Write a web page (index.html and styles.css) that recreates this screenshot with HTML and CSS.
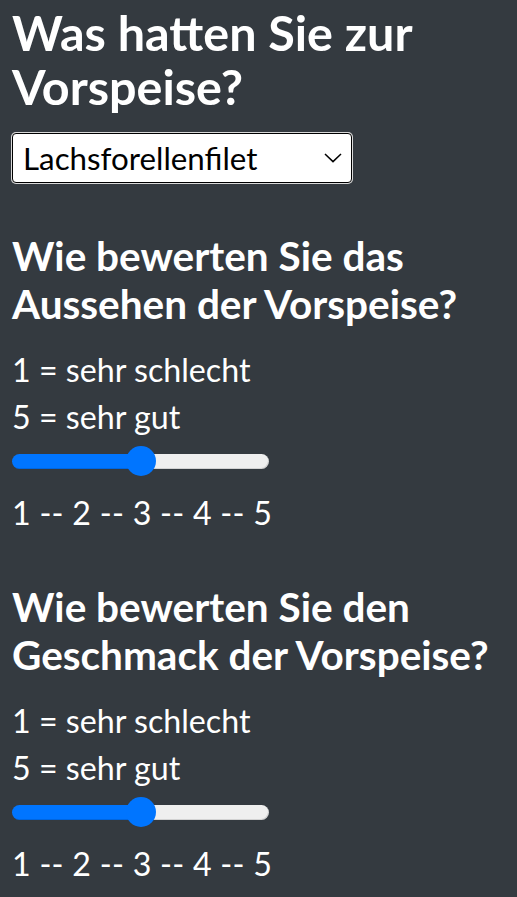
FILE: index.html
```html
<!DOCTYPE html>
<html lang="de">
<head>
<meta charset="utf-8">
<title>Vorspeise</title>
<link rel="stylesheet" href="styles.css">
</head>
<body>
<main class="page">
  <h1 class="title">Was hatten Sie zur Vorspeise?</h1>
  <div class="select-wrap">
    <select class="dish-select">
      <option>Lachsforellenfilet</option>
      <option>Tomatensuppe</option>
      <option>Salat</option>
    </select>
    <svg class="chevron" width="18" height="10" viewBox="0 0 18 10" aria-hidden="true">
      <path d="M1 1 L9 8.6 L17 1" fill="none" stroke="#000" stroke-width="1.5"/>
    </svg>
  </div>

  <section class="rating first">
    <h2 class="question">Wie bewerten Sie das Aussehen der Vorspeise?</h2>
    <p class="hint">1 = sehr schlecht</p>
    <p class="hint">5 = sehr gut</p>
    <input class="range" type="range" min="1" max="5" step="1" value="3">
    <p class="scale">1 -- 2 -- 3 -- 4 -- 5</p>
  </section>

  <section class="rating">
    <h2 class="question">Wie bewerten Sie den Geschmack der Vorspeise?</h2>
    <p class="hint">1 = sehr schlecht</p>
    <p class="hint">5 = sehr gut</p>
    <input class="range" type="range" min="1" max="5" step="1" value="3">
    <p class="scale">1 -- 2 -- 3 -- 4 -- 5</p>
  </section>
</main>
</body>
</html>
```

FILE: styles.css
```css
html, body {
  margin: 0;
  padding: 0;
  background: #343a40;
}

body {
  color: #ffffff;
  font-family: "Lato", "Open Sans", sans-serif;
  font-size: 32.2px;
  line-height: 47px;
}

.page {
  padding: 5px 12px 0 12px;
}

.title {
  margin: 0 0 20px 0;
  font-size: 48.5px;
  line-height: 54px;
  font-weight: 700;
}

.select-wrap {
  position: relative;
  width: 340px;
  height: 50px;
}

.dish-select {
  -webkit-appearance: none;
  appearance: none;
  display: block;
  box-sizing: border-box;
  width: 340px;
  height: 50px;
  margin: 0;
  padding: 0 40px 0 10px;
  font-family: "Lato", "Open Sans", sans-serif;
  font-size: 31.3px;
  color: #000000;
  background: #ffffff;
  border: 1px solid #000000;
  border-radius: 4px;
  box-shadow: 0 0 0 1px #d9d9d9;
  outline: none;
}

.chevron {
  position: absolute;
  right: 10px;
  top: 20px;
  pointer-events: none;
}

.rating.first {
  margin-top: 49px;
}

.rating {
  margin-top: 47px;
}

.question {
  margin: 0 0 18px 0;
  font-size: 40.5px;
  line-height: 48px;
  font-weight: 700;
}

.hint,
.scale {
  margin: 0;
}

.scale {
  letter-spacing: 0.25px;
}

.range {
  -webkit-appearance: none;
  appearance: none;
  display: block;
  width: 257px;
  height: 30px;
  margin: 6px 0 13px 0;
  padding: 0;
  background: transparent;
}

.range::-webkit-slider-runnable-track {
  height: 15px;
  border-radius: 8px;
  background: linear-gradient(to right, #0075ff 0, #0075ff 50%, #efefef 50%, #efefef 100%);
  box-shadow: inset -1px -1px 0 rgba(0, 0, 0, 0.12);
}

.range::-webkit-slider-thumb {
  -webkit-appearance: none;
  appearance: none;
  width: 30px;
  height: 30px;
  margin-top: -7.5px;
  border: none;
  border-radius: 50%;
  background: #0075ff;
}
```
